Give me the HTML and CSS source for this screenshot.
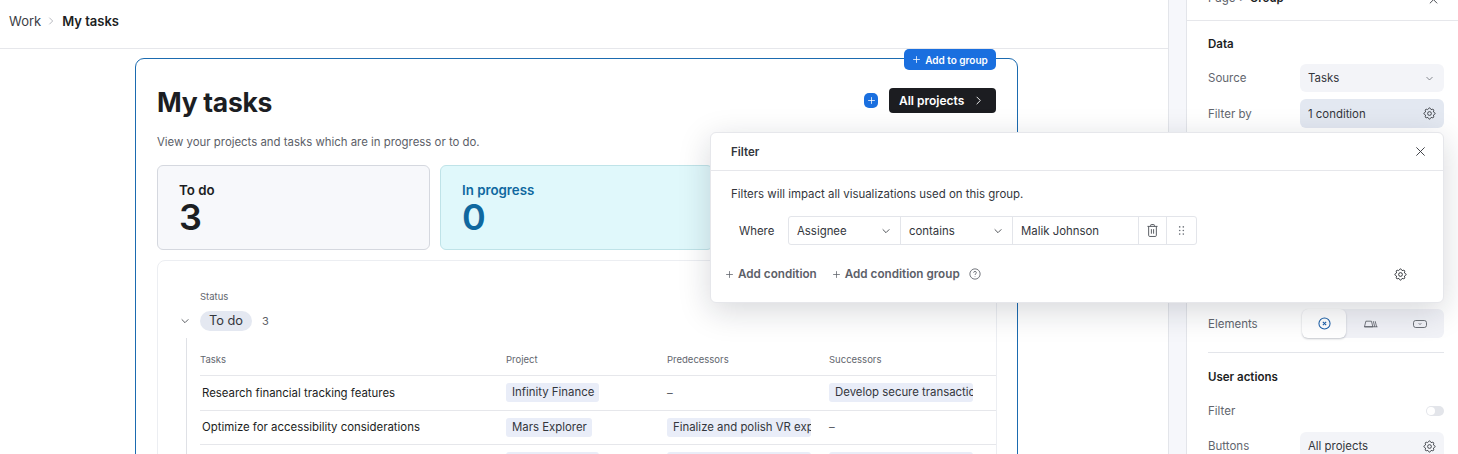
FILE: index.html
```html
<!DOCTYPE html>
<html>
  <head>
    <title>My tasks</title>
    <link rel="stylesheet" href="styles.css">
  </head>
  <body>
  <svg class="icon-defs" aria-hidden="true">
    <symbol id="i-gear" viewBox="0 0 24 24">
      <path d="M10.325 4.317c.426 -1.756 2.924 -1.756 3.35 0a1.724 1.724 0 0 0 2.573 1.066c1.543 -.94 3.31 .826 2.37 2.37a1.724 1.724 0 0 0 1.065 2.572c1.756 .426 1.756 2.924 0 3.35a1.724 1.724 0 0 0 -1.066 2.573c.94 1.543 -.826 3.31 -2.37 2.37a1.724 1.724 0 0 0 -2.572 1.065c-.426 1.756 -2.924 1.756 -3.35 0a1.724 1.724 0 0 0 -2.573 -1.066c-1.543 .94 -3.31 -.826 -2.37 -2.37a1.724 1.724 0 0 0 -1.065 -2.572c-1.756 -.426 -1.756 -2.924 0 -3.35a1.724 1.724 0 0 0 1.066 -2.573c-.94 -1.543 .826 -3.31 2.37 -2.37c1 .608 2.296 .07 2.572 -1.065z"/>
      <circle cx="12" cy="12" r="3"/>
    </symbol>
    <symbol id="i-down" viewBox="0 0 12 12"><path d="M2 4l4 4 4-4"/></symbol>
    <symbol id="i-right" viewBox="0 0 12 12"><path d="M4 2l4 4-4 4"/></symbol>
    <symbol id="i-plus" viewBox="0 0 12 12"><path d="M6 1.500v9M1.500 6h9"/></symbol>
    <symbol id="i-close" viewBox="0 0 12 12"><path d="M1.500 1.500l9 9M10.500 1.500l-9 9"/></symbol>
  </svg>

  <div class="page">
    <div class="main">
      <div class="topbar">
        <span class="crumb">Work</span>
        <svg class="crumb-sep"><use href="#i-right"/></svg>
        <span class="crumb-current">My tasks</span>
      </div>

      <div class="canvas">
        <div class="group">
          <button class="add-to-group"><svg class="add-to-group-icon"><use href="#i-plus"/></svg>Add to group</button>

          <div class="group-head">
            <h1>My tasks</h1>
            <div class="group-actions">
              <button class="mini-add"><svg><use href="#i-plus"/></svg></button>
              <button class="all-projects">All projects <svg><use href="#i-right"/></svg></button>
            </div>
          </div>
          <p class="group-desc">View your projects and tasks which are in progress or to do.</p>

          <div class="stats">
            <div class="stat">
              <div class="stat-label">To do</div>
              <div class="stat-value">3</div>
            </div>
            <div class="stat stat-progress">
              <div class="stat-label">In progress</div>
              <div class="stat-value">0</div>
            </div>
          </div>

          <div class="board">
            <div class="status-label">Status</div>
            <div class="status-row">
              <svg class="status-toggle"><use href="#i-down"/></svg>
              <span class="status-pill">To do</span>
              <span class="status-count">3</span>
            </div>
            <div class="table-wrap">
              <div class="row row-head">
                <div>Tasks</div>
                <div>Project</div>
                <div>Predecessors</div>
                <div>Successors</div>
              </div>
              <div class="row">
                <div class="task">Research financial tracking features</div>
                <div><span class="chip">Infinity Finance</span></div>
                <div class="none">–</div>
                <div><span class="chip chip-clip">Develop secure transactions</span></div>
              </div>
              <div class="row">
                <div class="task">Optimize for accessibility considerations</div>
                <div><span class="chip">Mars Explorer</span></div>
                <div><span class="chip chip-clip">Finalize and polish VR experience</span></div>
                <div class="none">–</div>
              </div>
              <div class="row">
                <div class="task"></div>
                <div><span class="chip">Infinity Finance</span></div>
                <div><span class="chip chip-clip"></span></div>
                <div><span class="chip chip-clip"></span></div>
              </div>
            </div>
          </div>
        </div>
      </div>
    </div>

    <div class="gutter"></div>

    <div class="panel">
      <div class="panel-top">
        <span class="panel-path">Page &gt; <b>Group</b></span>
        <svg class="panel-collapse"><use href="#i-down"/></svg>
      </div>
      <div class="panel-body">
        <h3>Data</h3>
        <div class="prop">
          <label>Source</label>
          <div class="field">Tasks <svg class="field-chevron"><use href="#i-down"/></svg></div>
        </div>
        <div class="prop">
          <label>Filter by</label>
          <div class="field field-active">1 condition <svg class="gear field-gear"><use href="#i-gear"/></svg></div>
        </div>

        <div class="prop prop-elements">
          <label>Elements</label>
          <div class="segments">
            <div class="segment segment-on">
              <svg viewBox="0 0 14 14" class="seg-icon seg-blue"><circle cx="7" cy="7" r="6"/><path d="M5.200 5.200l3.600 3.600M8.800 5.200l-3.600 3.600"/></svg>
            </div>
            <div class="segment">
              <svg viewBox="0 0 15 7" class="seg-wide"><path d="M.5 6.500L2 .5h6l1.500 6zM10 .5l1.500 6M12 .5l1.500 6M.5 6.500h14"/></svg>
            </div>
            <div class="segment">
              <svg viewBox="0 0 14 8" class="seg-wide"><rect x=".5" y=".5" width="13" height="7" rx="2.200"/><path d="M5.800 3.300L7 4.500l1.200-1.200"/></svg>
            </div>
          </div>
        </div>

        <hr>

        <h3>User actions</h3>
        <div class="prop prop-toggle">
          <label>Filter</label>
          <span class="toggle"></span>
        </div>
        <div class="prop">
          <label>Buttons</label>
          <div class="field">All projects <svg class="gear field-gear"><use href="#i-gear"/></svg></div>
        </div>
      </div>
    </div>

    <div class="filter-pop">
      <div class="filter-head">
        <span>Filter</span>
        <svg class="filter-close"><use href="#i-close"/></svg>
      </div>
      <div class="filter-body">
        <p>Filters will impact all visualizations used on this group.</p>
        <div class="where">
          <span class="where-label">Where</span>
          <div class="where-control">
            <div class="where-cell where-select">Assignee <svg><use href="#i-down"/></svg></div>
            <div class="where-cell where-select">contains <svg><use href="#i-down"/></svg></div>
            <div class="where-cell where-value">Malik Johnson</div>
            <div class="where-cell where-btn">
              <svg viewBox="0 0 12 14" class="trash"><path d="M.5 2.500h11M4 2.500V1.200q0-.7.7-.7h2.600q.7 0 .7.7v1.300M1.800 2.500v9.800q0 1.200 1.200 1.200h6q1.200 0 1.200-1.200V2.500M4.800 5.500v5M7.200 5.500v5"/></svg>
            </div>
            <div class="where-cell where-grip">
              <svg viewBox="0 0 10 12" class="grip"><circle cx="3" cy="2" r=".9"/><circle cx="7" cy="2" r=".9"/><circle cx="3" cy="6" r=".9"/><circle cx="7" cy="6" r=".9"/><circle cx="3" cy="10" r=".9"/><circle cx="7" cy="10" r=".9"/></svg>
            </div>
          </div>
        </div>
        <div class="filter-foot">
          <span class="add-link"><svg><use href="#i-plus"/></svg>Add condition</span>
          <span class="add-link"><svg><use href="#i-plus"/></svg>Add condition group</span>
          <svg viewBox="0 0 14 14" class="help"><circle cx="7" cy="7" r="6"/><path d="M5.400 5.500c0-2.100 3.200-2.100 3.200 0 0 1.300-1.600 1.300-1.600 2.600M7 9.800v.6"/></svg>
          <svg class="gear foot-gear"><use href="#i-gear"/></svg>
        </div>
      </div>
    </div>
  </div>
</body>
</html>
```

FILE: styles.css
```css
* {
  box-sizing: border-box;
}

html, body {
  margin: 0;
  height: 454px;
  overflow: hidden;
}

body {
  font-family: Inter, "Liberation Sans", sans-serif;
  font-size: 12px;
  color: #1c1e23;
  background-color: #fff;
}

.icon-defs {
  display: none;
}

svg {
  fill: none;
  stroke: currentColor;
  stroke-width: 1;
}

button {
  font-family: inherit;
  border: none;
  padding: 0;
}

.page {
  position: relative;
  display: flex;
  height: 454px;
  overflow: hidden;
}

.main {
  width: 1168px;
  flex-shrink: 0;
  overflow: hidden;
}

.topbar {
  height: 49px;
  display: flex;
  align-items: center;
  padding: 0 0 6px 9px;
  border-bottom: 1px solid #e6e7eb;
  font-size: 13px;
}

.crumb {
  color: #3b3e45;
}

.crumb-sep {
  width: 10px;
  height: 10px;
  margin: 0 6px 0 5px;
  color: #a9acb3;
}

.crumb-current {
  font-weight: 600;
}

.canvas {
  padding: 9px 150px 0 135px;
}

.group {
  position: relative;
  height: 500px;
  padding: 0 21px;
  border: 1px solid #1b6bb0;
  border-radius: 9px;
}

.add-to-group {
  position: absolute;
  top: -10px;
  right: 21px;
  width: 92px;
  height: 21px;
  display: flex;
  align-items: center;
  justify-content: center;
  background-color: #1a6fdf;
  color: #fff;
  border-radius: 5px;
  font-size: 10px;
  font-weight: 600;
}

.add-to-group-icon {
  width: 9px;
  height: 9px;
  margin-right: 4px;
}

.group-head {
  display: flex;
  justify-content: space-between;
  align-items: center;
  padding-top: 29px;
  height: 54px;
}

h1 {
  margin: 2px 0 0;
  font-size: 26.500px;
  font-weight: 700;
  letter-spacing: -0.3px;
}

.group-actions {
  display: flex;
  align-items: center;
  gap: 11px;
}

.mini-add {
  width: 14px;
  height: 15px;
  display: flex;
  align-items: center;
  justify-content: center;
  background-color: #1a6fdf;
  color: #fff;
  border-radius: 5px;
}

.mini-add svg {
  width: 9px;
  height: 9px;
}

.all-projects {
  width: 107px;
  height: 25px;
  display: flex;
  align-items: center;
  justify-content: space-between;
  padding: 0 12px 0 10px;
  background-color: #1c1d21;
  color: #fff;
  border-radius: 4px;
  font-size: 12px;
  font-weight: 600;
}

.all-projects svg {
  width: 11px;
  height: 11px;
}

.group-desc {
  margin: 21px 0 0;
  height: 16px;
  line-height: 16px;
  font-size: 11.400px;
  color: #5c6068;
}

.stats {
  display: grid;
  grid-template-columns: repeat(3, 273px);
  gap: 10px;
  margin-top: 15px;
}

.stat {
  height: 85px;
  padding: 17px 21px;
  background-color: #f7f8fb;
  border: 1px solid #d5d8df;
  border-radius: 6px;
}

.stat-label {
  font-size: 13.300px;
  font-weight: 600;
  line-height: 15px;
}

.stat-value {
  font-size: 36px;
  font-weight: 600;
  line-height: 38px;
}

.stat-progress {
  background-color: #e0f8fb;
  border-color: #bfe3e8;
  color: #0f689f;
}

.board {
  margin-top: 10px;
  height: 300px;
  width: 840px;
  padding: 30px 0 0 28px;
  border: 1px solid #eceef2;
  border-radius: 8px;
}

.status-label {
  margin-left: 14px;
  font-size: 9.500px;
  line-height: 12px;
  color: #62666e;
}

.status-row {
  display: flex;
  align-items: center;
  height: 20px;
  margin-top: 8px;
}

.status-toggle {
  width: 10px;
  height: 10px;
  margin: 0 10px 0 -6px;
  color: #3b3e45;
}

.status-pill {
  height: 20px;
  line-height: 20px;
  padding: 0 9px;
  background-color: #e4e8f1;
  border-radius: 10px;
  font-size: 12.800px;
  color: #33363c;
}

.status-count {
  margin-left: 10px;
  font-size: 11px;
  color: #5c6068;
}

.table-wrap {
  margin: 7px 0 0;
  padding: 0 0 0 13px;
  border-left: 1px solid #dfe1e6;
}

.row {
  display: grid;
  grid-template-columns: 306px 161px 162px 1fr;
  align-items: center;
  height: 34.500px;
  border-bottom: 1px solid #e6e7eb;
  font-size: 11.400px;
}

.row-head {
  height: 38px;
  padding-top: 6px;
  font-size: 9.500px;
  color: #62666e;
}

.task {
  padding-left: 2px;
}

.chip {
  display: inline-block;
  vertical-align: middle;
  height: 19px;
  line-height: 19px;
  padding: 0 5px 0 6px;
  background-color: #e9edf8;
  border-radius: 3px;
  white-space: nowrap;
  color: #33363c;
}

.chip-clip {
  width: 144px;
  overflow: hidden;
  padding-right: 0;
}

.none {
  color: #5c6068;
}

.gutter {
  width: 19px;
  flex-shrink: 0;
  background-color: #f6f7fb;
  border-left: 1px solid #e3e5ea;
  border-right: 1px solid #e3e5ea;
}

.panel {
  width: 271px;
  flex-shrink: 0;
  overflow: hidden;
  background-color: #fff;
}

.panel-top {
  height: 21px;
  display: flex;
  justify-content: space-between;
  align-items: flex-end;
  padding: 0 19px 15px 21px;
  border-bottom: 1px solid #e6e7eb;
  font-size: 11.500px;
  line-height: 14px;
  color: #5c6068;
}

.panel-path b {
  font-weight: 600;
  color: #1c1e23;
}

.panel-collapse {
  width: 11px;
  height: 11px;
  transform: rotate(180deg);
  margin-bottom: -2px;
  color: #3b3e45;
}

.panel-body {
  padding: 15px 14px 0 21px;
}

h3 {
  margin: 0;
  font-size: 11.500px;
  font-weight: 600;
  line-height: 16px;
}

.prop {
  display: flex;
  align-items: center;
  justify-content: space-between;
  margin-top: 7px;
}

.panel-body h3 + .prop {
  margin-top: 12px;
}

.prop label {
  font-size: 11.500px;
  color: #62666e;
}

.field {
  width: 144px;
  height: 28px;
  display: flex;
  align-items: center;
  justify-content: space-between;
  padding: 0 7px 0 8px;
  background-color: #f3f4f8;
  border-radius: 6px;
  font-size: 11.400px;
  color: #33363c;
}

.field-active {
  height: 29px;
  background-color: #e3e8f1;
}

.field-chevron {
  width: 9px;
  height: 9px;
  margin-right: 3px;
  color: #62666e;
}

.gear {
  stroke-width: 1.600;
}

.field-gear {
  width: 15px;
  height: 15px;
  color: #43474e;
}

.prop-elements {
  margin-top: 181px;
}

.segments {
  width: 142px;
  height: 29px;
  display: flex;
  background-color: #f1f2f7;
  border-radius: 6px;
}

.segment {
  flex: 1;
  display: flex;
  align-items: center;
  justify-content: center;
  color: #4d5158;
}

.segment-on {
  flex: 0 0 44px;
  background-color: #fff;
  border-radius: 6px;
  box-shadow: 0 1px 2px rgba(20, 30, 50, 0.25);
}

.seg-icon {
  width: 13px;
  height: 13px;
}

.seg-blue {
  color: #1b5fa8;
  stroke-width: 1.100;
}

.seg-wide {
  width: 14px;
  height: 8px;
  stroke-width: .8;
}

hr {
  margin: 14px 0 16px;
  border: none;
  border-top: 1px solid #e3e5ea;
}

.prop-toggle {
  height: 10px;
  margin-top: 21px !important;
}

.toggle {
  width: 18px;
  height: 10px;
  padding: 1px;
  background-color: #e3e5ea;
  border-radius: 5px;
}

.toggle::before {
  content: "";
  display: block;
  width: 8px;
  height: 8px;
  background-color: #fff;
  border-radius: 50%;
}

.prop-toggle + .prop {
  margin-top: 16px;
}

.filter-pop {
  position: absolute;
  top: 132px;
  left: 710px;
  width: 734px;
  height: 171px;
  background-color: #fff;
  border: 1px solid #e6e7eb;
  border-radius: 6px;
  box-shadow: 0 8px 32px rgba(20, 25, 40, 0.17);
}

.filter-head {
  height: 38px;
  display: flex;
  align-items: center;
  justify-content: space-between;
  padding: 0 17px 0 20px;
  border-bottom: 1px solid #e6e7eb;
  font-size: 11.500px;
  font-weight: 600;
  color: #33363c;
}

.filter-close {
  width: 11px;
  height: 11px;
  color: #33363c;
}

.filter-body {
  padding: 16px 0 0 20px;
}

.filter-body p {
  margin: 0;
  line-height: 14px;
  font-size: 11.450px;
  color: #33363c;
}

.where {
  display: flex;
  align-items: center;
  margin-top: 15px;
}

.where-label {
  width: 57px;
  padding-left: 8px;
  font-size: 11.400px;
  color: #33363c;
}

.where-control {
  display: flex;
  height: 29px;
  width: 409px;
  border: 1px solid #e3e5ea;
  border-radius: 3px;
}

.where-cell {
  display: flex;
  align-items: center;
  font-size: 11.400px;
  color: #33363c;
  border-right: 1px solid #e3e5ea;
}

.where-select {
  width: 112px;
  justify-content: space-between;
  padding: 0 9px 0 8px;
}

.where-select svg {
  width: 10px;
  height: 10px;
}

.where-value {
  width: 126px;
  padding: 0 8px;
}

.where-btn {
  width: 28px;
  justify-content: center;
}

.where-grip {
  flex: 1;
  justify-content: center;
  border-right: none;
}

.trash {
  width: 11px;
  height: 13px;
  color: #4d5158;
}

.grip {
  width: 9px;
  height: 11px;
  fill: #6f737b;
  stroke: none;
}

.filter-foot {
  display: flex;
  align-items: center;
  height: 16px;
  margin: 21px 0 0 -6px;
}

.add-link {
  display: flex;
  align-items: center;
  margin-right: 15px;
  font-size: 11.700px;
  font-weight: 600;
  color: #5c6068;
}

.add-link svg {
  width: 9px;
  height: 9px;
  margin-right: 4px;
  color: #5c6068;
}

.help {
  width: 12px;
  height: 12px;
  margin-left: -6px;
  color: #5c6068;
}

.foot-gear {
  width: 15px;
  height: 15px;
  margin-left: 412px;
  color: #33363c;
}
```
